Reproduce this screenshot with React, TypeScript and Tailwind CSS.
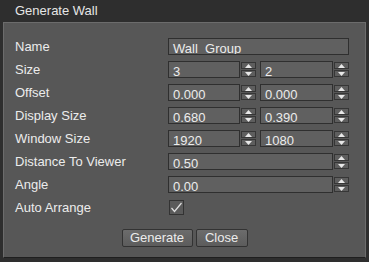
import React from 'react'

// Small up/down arrows next to a numeric field
function Spin() {
  return (
    <div className="ml-px flex h-[17px] w-[15px] flex-col justify-between py-px">
      <div className="flex h-[7px] items-center justify-center border border-[#363636] bg-[#5e5e5e]">
        <svg width="7" height="4" viewBox="0 0 7 4">
          <path d="M3.5 0 L7 4 L0 4 Z" fill="#e8e8e8" />
        </svg>
      </div>
      <div className="flex h-[7px] items-center justify-center border border-[#363636] bg-[#5e5e5e]">
        <svg width="7" height="4" viewBox="0 0 7 4">
          <path d="M0 0 L7 0 L3.5 4 Z" fill="#e8e8e8" />
        </svg>
      </div>
    </div>
  )
}

function Field({value, className}: {value: string; className: string}) {
  return (
    <div
      className={
        'flex h-[17px] items-end overflow-hidden border border-[#2f2f2f] bg-[#606060] pl-[4px] text-[13px] leading-[15px] text-[#ececec] ' +
        className
      }
    >
      <span className="relative top-[2px]">{value}</span>
    </div>
  )
}

function Row({label, children}: {label: string; children: React.ReactNode}) {
  return (
    <div className="flex h-[17px] items-center">
      <div className="w-[153px] text-[13px] text-[#ececec]">{label}</div>
      <div className="flex items-center">{children}</div>
    </div>
  )
}

function Pair({a, b}: {a: string; b: string}) {
  return (
    <>
      <Field value={a} className="w-[72px]" />
      <Spin />
      <Field value={b} className="ml-[4px] w-[73px]" />
      <Spin />
    </>
  )
}

export default function App() {
  return (
    <div className="h-[262px] w-[369px] bg-[#2e2e2e] font-['Liberation_Sans',Arial,sans-serif]">
      <div className="flex h-[22px] items-center pl-[15px] text-[13px] text-[#e6e6e6]">Generate Wall</div>
      <div className="ml-[3px] h-[236px] w-[363px] border border-[#6c6c6c] border-b-[#1f1f1f] bg-[#575757] pl-[11px] pt-[15px]">
        <div className="flex flex-col gap-[6px]">
          <Row label="Name">
            <Field value="Wall_Group" className="w-[181px]" />
          </Row>
          <Row label="Size">
            <Pair a="3" b="2" />
          </Row>
          <Row label="Offset">
            <Pair a="0.000" b="0.000" />
          </Row>
          <Row label="Display Size">
            <Pair a="0.680" b="0.390" />
          </Row>
          <Row label="Window Size">
            <Pair a="1920" b="1080" />
          </Row>
          <Row label="Distance To Viewer">
            <Field value="0.50" className="w-[165px]" />
            <Spin />
          </Row>
          <Row label="Angle">
            <Field value="0.00" className="w-[165px]" />
            <Spin />
          </Row>
          <Row label="Auto Arrange">
            <div className="ml-px flex h-[15px] w-[15px] items-center justify-center border border-[#333] bg-[#5a5a5a]">
              <svg width="13" height="11" viewBox="0 0 13 11">
                <path d="M1.5 6 L4.5 9.5 L11.5 1" fill="none" stroke="#e0e0e0" strokeWidth="1.2" />
              </svg>
            </div>
          </Row>
        </div>
        <div className="mt-[13px] flex justify-center gap-[3px] pr-[11px]">
          <button className="h-[18px] w-[71px] rounded-[2px] border border-[#333] bg-gradient-to-b from-[#6c6c6c] to-[#5c5c5c] text-[13px] leading-[16px] text-[#ececec]">
            Generate
          </button>
          <button className="h-[18px] w-[52px] rounded-[2px] border border-[#333] bg-gradient-to-b from-[#6c6c6c] to-[#5c5c5c] text-[13px] leading-[16px] text-[#ececec]">
            Close
          </button>
        </div>
      </div>
    </div>
  )
}
